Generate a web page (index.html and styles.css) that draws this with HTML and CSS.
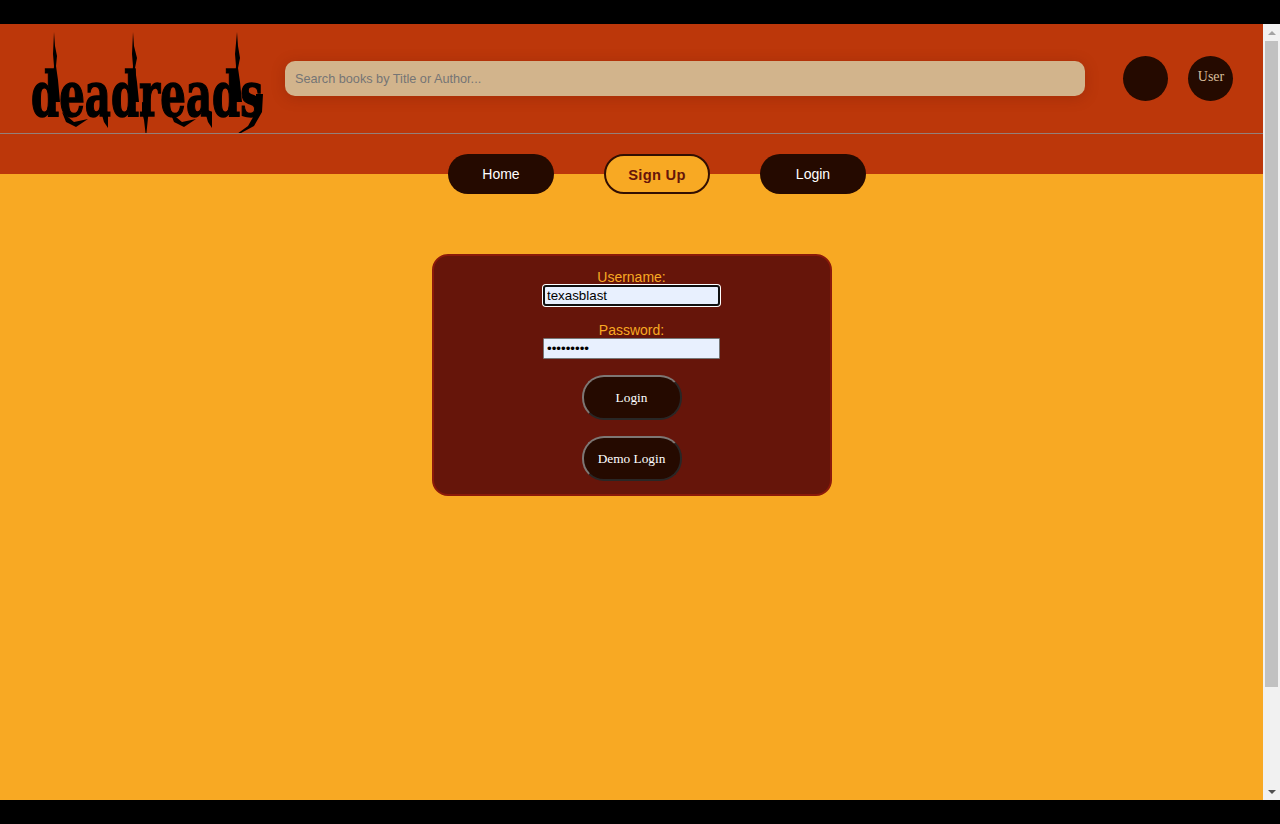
FILE: index.html
```html
<!DOCTYPE html>
<html lang="en">

<head>
    <meta charset="UTF-8">
    <meta name="viewport" content="width=device-width, initial-scale=1.0">
    <title>deadreads</title>
    <link rel="stylesheet" href="styles.css">
</head>

<body>
    <div class="black-bar"></div>
    <div class="window">
        <div class="page">
            <header class="top-header">
                <svg class="logo" viewBox="0 0 235 93" aria-label="deadreads">
                    <text class="logo-text" x="1" y="84" textLength="232" lengthAdjust="spacingAndGlyphs">deadreads</text>
                    <path d="M24 0 L25 14 L27 24 L26 34 L28 48 L30 70 L21 70 L23 48 L24 34 L23 22 Z" />
                    <path d="M103 0 L104 14 L107 26 L105 36 L107 50 L109 70 L100 70 L102 48 L103 34 L102 22 Z" />
                    <path d="M207 0 L208 14 L210 26 L208 36 L210 50 L212 70 L203 70 L205 48 L206 34 L205 22 Z" />
                    <path d="M112 70 L119 72 L118 86 L116 105 L114 88 L112 80 Z" />
                    <path d="M233 62 L232 80 L224 94 L200 107 L218 94 L226 80 L226 62 Z" />
                    <path d="M32 80 L44 90 L58 87 L46 95 L36 90 Z" />
                    <path d="M70 76 L78 80 L78 96 L74 90 Z" />
                    <path d="M140 80 L152 90 L166 87 L154 95 L144 90 Z" />
                    <path d="M174 76 L182 80 L182 96 L178 90 Z" />
                </svg>
                <input class="search-bar" type="text" placeholder="Search books by Title or Author...">
                <div class="user-circle"></div>
                <div class="user-circle user-name">User</div>
            </header>
            <hr class="header-line">
            <nav class="nav-strip">
                <a class="nav-btn" href="#">Home</a>
                <a class="nav-btn signup-btn" href="#">Sign Up</a>
                <a class="nav-btn" href="#">Login</a>
            </nav>
            <main class="content">
                <form class="login-form">
                    <div class="form-group">
                        <label for="username">Username:</label>
                        <input class="is-focused" type="text" id="username" value="texasblast">
                    </div>
                    <div class="form-group">
                        <label for="password">Password:</label>
                        <input type="password" id="password" value="texasblas">
                    </div>
                    <button type="button" class="form-btn">Login</button>
                    <button type="button" class="form-btn">Demo Login</button>
                </form>
            </main>
        </div>
        <div class="scrollbar">
            <div class="arrow-box"><span class="arrow-up"></span></div>
            <div class="scroll-track">
                <div class="scroll-thumb"></div>
            </div>
            <div class="arrow-box"><span class="arrow-down"></span></div>
        </div>
    </div>
    <div class="black-bar"></div>
</body>

</html>
```

FILE: styles.css
```css
* {
    box-sizing: border-box;
}

body {
    margin: 0;
    height: 824px;
    overflow: hidden;
    display: flex;
    flex-direction: column;
    background-color: #000;
    font-family: "Liberation Sans", Arial, sans-serif;
}

.black-bar {
    height: 24px;
    flex: none;
    background-color: #000;
}

.window {
    flex: 1;
    min-height: 0;
    display: flex;
}

.page {
    flex: 1;
    min-width: 0;
    display: flex;
    flex-direction: column;
    background-color: #f8a923;
}

/* header */
.top-header {
    height: 109px;
    flex: none;
    display: flex;
    align-items: center;
    padding-left: 30px;
    background-color: #bc370a;
}

.logo {
    width: 235px;
    height: 93px;
    flex: none;
    overflow: visible;
    fill: #000;
}

.logo-text {
    font-family: "DejaVu Serif", serif;
    font-weight: bold;
    font-size: 62px;
    stroke: #000;
    stroke-width: 1.5px;
}

.search-bar {
    width: 800px;
    height: 35px;
    margin-left: 20px;
    padding: 0 10px;
    border: none;
    border-radius: 10px;
    background-color: #d2b48c;
    box-shadow: 0 2px 14px rgba(90, 20, 0, 0.25);
    font-family: "Liberation Sans", Arial, sans-serif;
    font-size: 12.7px;
}

.search-bar::placeholder {
    color: #757575;
}

.user-circle {
    width: 45px;
    height: 45px;
    flex: none;
    margin-left: 38px;
    border-radius: 50%;
    background-color: #250a00;
}

.user-name {
    margin-left: 20px;
    padding-top: 13px;
    padding-left: 1px;
    text-align: center;
    font-family: "Liberation Serif", serif;
    font-size: 14px;
    color: #d8bf9c;
}

.header-line {
    height: 1px;
    flex: none;
    margin: 0;
    border: none;
    background-color: #94807a;
}

/* nav */
.nav-strip {
    height: 40px;
    flex: none;
    display: flex;
    justify-content: center;
    gap: 50px;
    padding-top: 20px;
    padding-left: 51px;
    background-color: #bc370a;
}

.nav-btn {
    width: 106px;
    height: 40px;
    display: flex;
    justify-content: center;
    align-items: center;
    border-radius: 20px;
    background-color: #250a00;
    color: #fff;
    font-size: 14px;
    text-decoration: none;
}

.signup-btn {
    padding-top: 1px;
    border: 2px solid #320f02;
    background-color: #f8a923;
    color: #66150a;
    font-size: 14.7px;
    font-weight: bold;
    letter-spacing: 0.3px;
}

/* login form */
.content {
    flex: 1;
    display: flex;
    justify-content: center;
    align-items: flex-start;
    padding-top: 80px;
}

.login-form {
    width: 400px;
    height: 242px;
    display: flex;
    flex-direction: column;
    align-items: center;
    padding-top: 13px;
    border: 2px solid #8b1a0a;
    border-radius: 16px;
    background-color: #66150a;
}

.form-group {
    display: flex;
    flex-direction: column;
    align-items: center;
    margin-bottom: 16px;
}

.form-group label {
    height: 16px;
    font-size: 14px;
    line-height: 16px;
    color: #f8a923;
}

.form-group input {
    width: 177px;
    height: 21px;
    padding: 1px 3px;
    border: 1px solid #767676;
    border-radius: 1px;
    background-color: #e8f0fe;
    color: #000;
    font-family: "Liberation Sans", Arial, sans-serif;
    font-size: 13.33px;
}

.form-group input.is-focused {
    padding: 0 2px;
    border: 2px solid #101010;
    border-radius: 3px;
    box-shadow: 0 0 0 1px #fff;
}

.form-btn {
    width: 100px;
    height: 45px;
    flex: none;
    margin-bottom: 16px;
    border: 2px outset #7d7774;
    border-radius: 22px;
    background-color: #250a00;
    color: #fff;
    font-family: "Liberation Serif", serif;
    font-size: 13.33px;
}

/* scrollbar */
.scrollbar {
    width: 17px;
    flex: none;
    display: flex;
    flex-direction: column;
    background-color: #f1f1f1;
}

.arrow-box {
    height: 17px;
    flex: none;
    display: flex;
    justify-content: center;
    align-items: center;
}

.arrow-up {
    border-left: 4px solid transparent;
    border-right: 4px solid transparent;
    border-bottom: 4px solid #a3a3a3;
}

.arrow-down {
    border-left: 4px solid transparent;
    border-right: 4px solid transparent;
    border-top: 4px solid #505050;
}

.scroll-track {
    flex: 1;
    padding: 0 2px;
}

.scroll-thumb {
    height: 646px;
    background-color: #c1c1c1;
}
```
